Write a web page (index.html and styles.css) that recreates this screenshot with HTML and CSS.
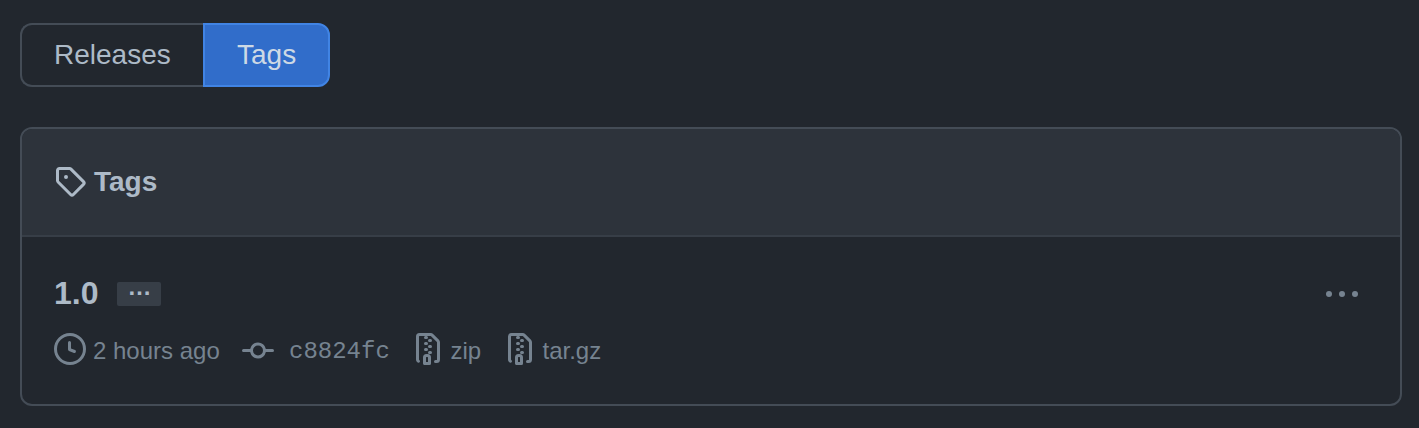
FILE: index.html
```
<!DOCTYPE html>
<html lang="en">
<head>
<meta charset="utf-8">
<title>Tags</title>
<link rel="stylesheet" href="styles.css">
</head>
<body>
<svg class="sprite" aria-hidden="true">
  <symbol id="zip" viewBox="0 0 16 16"><path d="M3.5 1.75a.25.25 0 01.25-.25h3a.75.75 0 000 1.5h.5a.75.75 0 000-1.5h2.086a.25.25 0 01.177.073l2.914 2.914a.25.25 0 01.073.177v8.586a.25.25 0 01-.25.25h-.5a.75.75 0 000 1.5h.5A1.75 1.75 0 0014 13.25V4.664c0-.464-.184-.909-.513-1.237L10.573.513A1.75 1.75 0 009.336 0H3.75A1.75 1.75 0 002 1.75v11.5c0 .649.353 1.214.874 1.515a.75.75 0 10.752-1.298.25.25 0 01-.126-.217V1.75zM8.75 3a.75.75 0 000 1.5h.5a.75.75 0 000-1.5h-.5zM6 5.25a.75.75 0 01.75-.75h.5a.75.75 0 010 1.5h-.5A.75.75 0 016 5.25zm2 1.5A.75.75 0 018.75 6h.5a.75.75 0 010 1.5h-.5A.75.75 0 018 6.75zm-1.25.75a.75.75 0 000 1.5h.5a.75.75 0 000-1.5h-.5zM8 9.75A.75.75 0 018.75 9h.5a.75.75 0 010 1.5h-.5A.75.75 0 018 9.75zm-.75.75a1.75 1.75 0 00-1.75 1.75v3c0 .414.336.75.75.75h2.5a.75.75 0 00.75-.75v-3a1.75 1.75 0 00-1.75-1.75h-.5zM7 12.25a.25.25 0 01.25-.25h.5a.25.25 0 01.25.25v2.25H7v-2.25z"/></symbol>
</svg>
<nav class="subnav">
  <a class="subnav-item">Releases</a>
  <a class="subnav-item selected">Tags</a>
</nav>
<main class="box">
  <header class="box-header">
    <svg class="icon" viewBox="0 0 16 16"><path d="M1 7.775V2.75C1 1.784 1.784 1 2.75 1h5.025c.464 0 .91.184 1.238.513l6.25 6.25a1.75 1.75 0 0 1 0 2.474l-5.026 5.026a1.75 1.75 0 0 1-2.474 0l-6.25-6.25A1.752 1.752 0 0 1 1 7.775Zm1.5 0c0 .066.026.13.073.177l6.25 6.25a.25.25 0 0 0 .354 0l5.025-5.025a.25.25 0 0 0 0-.354l-6.25-6.25a.25.25 0 0 0-.177-.073H2.75a.25.25 0 0 0-.25.25ZM6 5a1 1 0 1 1 0 2 1 1 0 0 1 0-2Z"/></svg>
    <h3>Tags</h3>
  </header>
  <section class="row">
    <div class="title">
      <h4>1.0</h4>
      <button class="expander">…</button>
      <svg class="icon menu" viewBox="0 0 16 16"><circle cx="1.5" cy="7.5" r="1.5"/><circle cx="8" cy="7.5" r="1.5"/><circle cx="14.5" cy="7.5" r="1.5"/></svg>
    </div>
    <ul class="meta">
      <li class="time"><svg class="icon" viewBox="0 0 16 16"><path d="M8 0a8 8 0 1 1 0 16A8 8 0 0 1 8 0ZM1.5 8a6.5 6.5 0 1 0 13 0 6.5 6.5 0 0 0-13 0Zm7-3.25v2.992l2.028.812a.75.75 0 0 1-.557 1.392l-2.5-1A.751.751 0 0 1 7 8.25v-3.5a.75.75 0 0 1 1.5 0Z"/></svg><span>2 hours ago</span></li>
      <li class="commit"><svg class="icon" viewBox="0 0 16 16"><path d="M11.93 8.5a4.002 4.002 0 0 1-7.86 0H.75a.75.75 0 0 1 0-1.5h3.32a4.002 4.002 0 0 1 7.86 0h3.32a.75.75 0 0 1 0 1.5Zm-1.43-.75a2.5 2.5 0 1 0-5 0 2.5 2.5 0 0 0 5 0Z"/></svg><code>c8824fc</code></li>
      <li class="file"><svg class="icon"><use href="#zip"/></svg><span>zip</span></li>
      <li class="file"><svg class="icon"><use href="#zip"/></svg><span>tar.gz</span></li>
    </ul>
  </section>
</main>
</body>
</html>
```
FILE: styles.css
```
* { box-sizing: border-box; }
body {
  margin: 0;
  padding: 23px 17px 0 20px;
  background: #22272e;
  color: #adbac7;
  font: 28px/40px "Liberation Sans", Arial, sans-serif;
}
.sprite { display: none; }
.icon { width: 32px; height: 32px; flex: none; fill: currentColor; display: block; }
h3, h4 { margin: 0; }
.subnav { display: flex; margin-bottom: 40px; }
.subnav-item {
  height: 64px;
  padding: 10px 32px;
  border: 2px solid #444c56;
  border-right: 0;
  border-radius: 12px 0 0 12px;
  width: 183px;
}
.subnav-item.selected {
  width: 127px;
  border: 2px solid #4184e4;
  border-radius: 0 12px 12px 0;
  background: #316dca;
  color: #cdd9e5;
}
.box { height: 279px; border: 2px solid #444c56; border-radius: 12px; overflow: hidden; }
.box-header {
  display: flex;
  align-items: center;
  gap: 8px;
  height: 108px;
  padding: 0 32px;
  background: #2d333b;
  border-bottom: 2px solid #373e47;
}
.box-header .icon { margin-bottom: 2px; }
.box-header h3 { font-size: 28px; }
.row { padding: 32px 42px 0 32px; }
.title { display: flex; align-items: center; height: 48px; }
.title h4 { font-size: 32px; line-height: 48px; }
.expander {
  width: 44px;
  height: 24px;
  margin: 2px 0 0 19px;
  padding: 0 10px 14px;
  border: 0;
  border-radius: 2px;
  background: #373e47;
  color: #adbac7;
  font: bold 24px/10px "Liberation Sans", Arial, sans-serif;
}
.menu { margin: 4px 0 0 auto; color: #768390; }
.meta {
  display: flex;
  margin: 16px 0 0;
  padding: 0;
  list-style: none;
  color: #768390;
  font-size: 24px;
  line-height: 36px;
}
.meta li { display: flex; }
.time { width: 188px; gap: 7px; }
.commit { width: 170px; gap: 15px; }
.commit .icon { margin-top: 2px; }
.commit code { font: 24px/36px "Liberation Mono", monospace; padding-top: 1px; }
.file { width: 92px; gap: 6.5px; white-space: nowrap; }
```
